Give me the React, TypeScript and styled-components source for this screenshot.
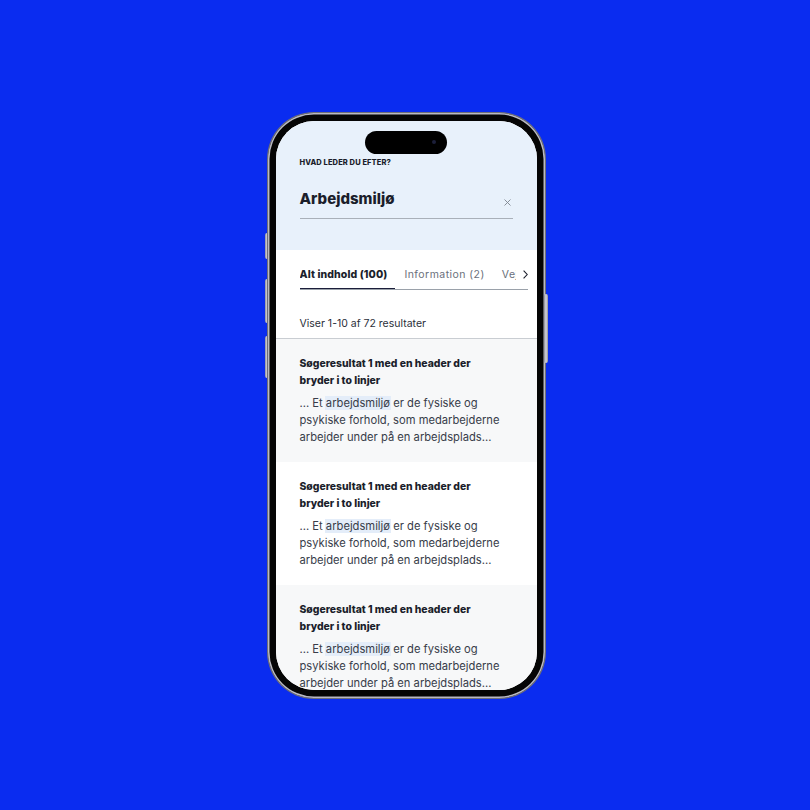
import React from 'react';
import styled, { createGlobalStyle } from 'styled-components';

const GlobalStyle = createGlobalStyle`
  html, body {
    margin: 0;
    padding: 0;
    background: #0a2cf0;
  }
  * { box-sizing: border-box; }
`;

//#region Phone
const Page = styled.div`
  width: 810px;
  height: 810px;
  display: flex;
  align-items: center;
  justify-content: center;
  background: #0a2cf0;
  font-family: Inter, "Liberation Sans", sans-serif;
`;

const Device = styled.div`
  display: flex;
  align-items: flex-start;
  margin-left: 2px;
`;

const ButtonRail = styled.div<{ $side: 'left' | 'right' }>`
  display: flex;
  flex-direction: column;
  width: 4px;
  ${p => (p.$side === 'left' ? 'margin-right: -1px;' : 'margin-left: -1px;')}
`;

const SideButton = styled.div<{ $offset: number; $h: number }>`
  margin-top: ${p => p.$offset}px;
  height: ${p => p.$h}px;
  border-radius: 2px;
  background: linear-gradient(90deg, #8d8d96, #d6d6de, #8d8d96);
`;

const Phone = styled.div`
  width: 277px;
  height: 585px;
  padding: 8px;
  border-radius: 46px;
  background: #050505;
  box-shadow: 0 0 0 1px #6f6f78, inset 0 0 0 1.5px #b9b9c2;
`;

const Screen = styled.div`
  position: relative;
  width: 100%;
  height: 100%;
  border-radius: 38px;
  overflow: hidden;
  background: #ffffff;
`;

const Island = styled.div`
  position: absolute;
  top: 10px;
  left: 50%;
  transform: translateX(-50%);
  width: 82px;
  height: 23px;
  border-radius: 12px;
  background: #000;
  z-index: 2;

  &::after {
    content: '';
    position: absolute;
    right: 11px;
    top: 9px;
    width: 4px;
    height: 4px;
    border-radius: 50%;
    background: #1c1f3a;
  }
`;
//#endregion

//#region Search header
const Header = styled.div`
  background: #e8f1fb;
  padding: 37px 24px 31px 24px;
`;

const Label = styled.div`
  font-size: 7.5px;
  line-height: 10px;
  font-weight: 800;
  letter-spacing: 0.1px;
  color: #1b1e2b;
`;

const InputRow = styled.div`
  margin-top: 20px;
  display: flex;
  align-items: center;
  justify-content: space-between;
  padding-bottom: 9px;
  border-bottom: 1.5px solid #a9b0b9;
`;

const Query = styled.div`
  font-size: 15px;
  line-height: 21px;
  font-weight: 800;
  color: #1b1e2b;
`;

const ClearButton = styled.button`
  border: none;
  background: none;
  padding: 0;
  margin: 8px 2px 0 0;
  display: flex;
  cursor: pointer;
`;
//#endregion

//#region Tabs
const TabsWrap = styled.div`
  display: flex;
  align-items: flex-start;
  margin: 0 9px 0 24px;
  padding-top: 18px;
  border-bottom: 1px solid #9aa1aa;
`;

const TabList = styled.div`
  flex: 1;
  display: flex;
  gap: 9px;
  overflow: hidden;
  white-space: nowrap;
`;

const Tab = styled.div<{ $active?: boolean }>`
  font-size: 10.5px;
  line-height: 14px;
  padding: 0 8px 6px 0;
  font-weight: ${p => (p.$active ? 800 : 400)};
  letter-spacing: ${p => (p.$active ? '0.1px' : '0.45px')};
  color: ${p => (p.$active ? '#1b1e2b' : '#6a707b')};
  border-bottom: 2px solid ${p => (p.$active ? '#1b1e3a' : 'transparent')};
  margin-bottom: -1px;
`;

const TabArrow = styled.div`
  flex: none;
  width: 12px;
  height: 14px;
  display: flex;
  align-items: center;
  justify-content: flex-end;
  background: #fff;
`;
//#endregion

//#region Results
const Count = styled.div`
  padding: 27px 24px 7px;
  font-size: 10.5px;
  line-height: 14px;
  color: #2b2f3a;
  border-bottom: 1px solid #c9cdd2;
`;

const Result = styled.div<{ $shaded?: boolean }>`
  padding: 16px 24px 16px 24px;
  height: 123px;
  background: ${p => (p.$shaded ? '#f7f8f9' : '#ffffff')};
`;

const ResultTitle = styled.div`
  max-width: 190px;
  font-size: 10.4px;
  line-height: 17px;
  font-weight: 800;
  color: #1b1e2b;
`;

const ResultBody = styled.div`
  margin-top: 6px;
  font-size: 11.2px;
  line-height: 17px;
  color: #383d4a;
`;

const Mark = styled.mark`
  background: #e4edf9;
  color: inherit;
  box-shadow: -1px 0 0 #e4edf9, 1px 0 0 #e4edf9;
`;
//#endregion

const results = [0, 1, 2];

export default function App() {
  return (
    <>
      <GlobalStyle />
      <Page>
        <Device>
          <ButtonRail $side="left">
            <SideButton $offset={120} $h={26} />
            <SideButton $offset={20} $h={44} />
            <SideButton $offset={13} $h={42} />
          </ButtonRail>
          <Phone>
            <Screen>
              <Island />
              <Header>
                <Label>HVAD LEDER DU EFTER?</Label>
                <InputRow>
                  <Query>Arbejdsmiljø</Query>
                  <ClearButton aria-label="Ryd">
                    <svg width="7" height="7" viewBox="0 0 7 7">
                      <path d="M0.5 0.5 L6.5 6.5 M6.5 0.5 L0.5 6.5" stroke="#7d848e" strokeWidth="0.9" />
                    </svg>
                  </ClearButton>
                </InputRow>
              </Header>
              <TabsWrap>
                <TabList>
                  <Tab $active>Alt indhold (100)</Tab>
                  <Tab>Information (2)</Tab>
                  <Tab>Vejledninger (12)</Tab>
                </TabList>
                <TabArrow>
                  <svg width="5" height="9" viewBox="0 0 5 9">
                    <path d="M0.6 0.6 L4.2 4.5 L0.6 8.4" fill="none" stroke="#1b1e2b" strokeWidth="1.1" />
                  </svg>
                </TabArrow>
              </TabsWrap>
              <Count>Viser 1-10 af 72 resultater</Count>
              {results.map(i => (
                <Result key={i} $shaded={i % 2 === 0}>
                  <ResultTitle>Søgeresultat 1 med en header der bryder i to linjer</ResultTitle>
                  <ResultBody>
                    ... Et <Mark>arbejdsmiljø</Mark> er de fysiske og psykiske forhold, som medarbejderne arbejder under på en arbejdsplads...
                  </ResultBody>
                </Result>
              ))}
            </Screen>
          </Phone>
          <ButtonRail $side="right">
            <SideButton $offset={181} $h={69} />
          </ButtonRail>
        </Device>
      </Page>
    </>
  );
}
